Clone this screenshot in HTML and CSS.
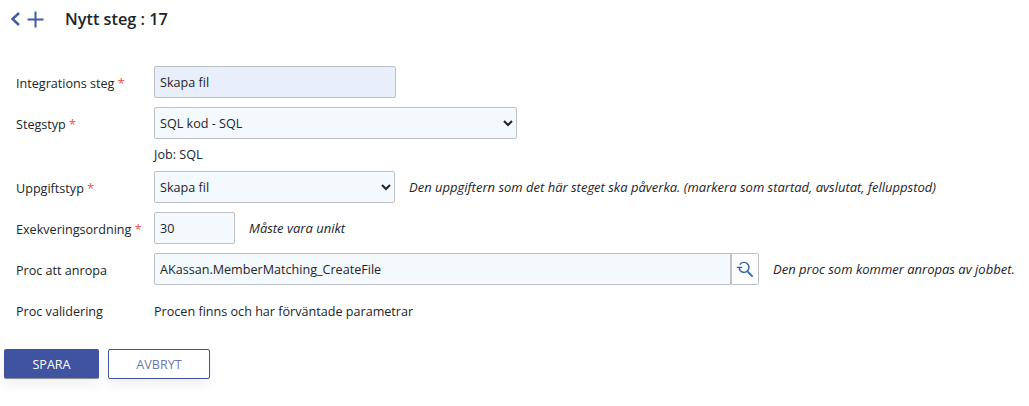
FILE: index.html
```html
<!DOCTYPE html>
<html lang="en">

<head>
    <meta charset="UTF-8">
    <meta name="viewport" content="width=device-width, initial-scale=1.0">
    <title>Nytt steg</title>
    <link rel="stylesheet" href="styles.css">
</head>

<body>
    <div class="header">
        <svg class="icon-back" width="12" height="16" viewBox="0 0 12 16">
            <path d="M10 2 L3.5 8 L10 14" fill="none" stroke="#3f5aa6" stroke-width="2.4" />
        </svg>
        <svg class="icon-add" width="17" height="17" viewBox="0 0 17 17">
            <path d="M8.5 0.5 V16.5 M0.5 8.5 H16.5" fill="none" stroke="#3f5aa6" stroke-width="2" />
        </svg>
        <h1>Nytt steg : 17</h1>
    </div>

    <div class="form">
        <div class="row">
            <label>Integrations steg <span class="req">*</span></label>
            <input class="field field-name" type="text" value="Skapa fil">
        </div>
        <div class="row">
            <label>Stegstyp <span class="req">*</span></label>
            <select class="field field-type">
                <option>SQL kod - SQL</option>
            </select>
        </div>
        <div class="job">Job: SQL</div>
        <div class="row">
            <label>Uppgiftstyp <span class="req">*</span></label>
            <select class="field field-task">
                <option>Skapa fil</option>
            </select>
            <em>Den uppgiftern som det här steget ska påverka. (markera som startad, avslutat, felluppstod)</em>
        </div>
        <div class="row">
            <label>Exekveringsordning <span class="req">*</span></label>
            <input class="field field-order" type="text" value="30">
            <em>Måste vara unikt</em>
        </div>
        <div class="row">
            <label>Proc att anropa</label>
            <div class="lookup">
                <input class="field field-proc" type="text" value="AKassan.MemberMatching_CreateFile">
                <button class="lookup-btn" type="button">
                    <svg width="18" height="18" viewBox="0 0 18 18">
                        <path d="M3.8 4.6 A5 5 0 1 1 3.2 8.8" fill="none" stroke="#2f5fa8" stroke-width="1.4" />
                        <path d="M0.8 7.4 H6.2 M3.5 7.4 V9.6" fill="none" stroke="#2f5fa8" stroke-width="1.3" />
                        <path d="M11.8 11.8 L16.6 16.6" fill="none" stroke="#2f6fc0" stroke-width="2" />
                    </svg>
                </button>
            </div>
            <em>Den proc som kommer anropas av jobbet.</em>
        </div>
        <div class="row row-text">
            <label>Proc validering</label>
            <span>Procen finns och har förväntade parametrar</span>
        </div>
    </div>

    <div class="buttons">
        <button class="btn btn-save" type="button">SPARA</button>
        <button class="btn btn-cancel" type="button">AVBRYT</button>
    </div>
</body>

</html>
```

FILE: styles.css
```css
body {
    margin: 0;
    height: 406px;
    overflow: hidden;
    background: #fff;
    color: #212529;
    font-family: "Open Sans", "Noto Sans", sans-serif;
    font-size: 12.6px;
}

.header {
    display: flex;
    align-items: center;
    height: 38px;
    padding-left: 9px;
}

.icon-add {
    margin-left: 6px;
}

h1 {
    margin: 0 0 0 21px;
    font-size: 16.3px;
    font-weight: 600;
}

.form {
    margin-top: 28px;
    padding-left: 16px;
}

.row {
    display: flex;
    align-items: center;
    min-height: 32px;
    margin-bottom: 9px;
}

.row label {
    flex: none;
    width: 138px;
    padding-top: 2px;
}

.row-text label {
    padding-top: 0;
}

.req {
    color: #f0504f;
}

.field {
    box-sizing: border-box;
    height: 32px;
    padding: 1px 5px 0;
    border: 1px solid #bdc1c6;
    border-radius: 2px;
    background: #f4f9fe;
    color: #212529;
    font-family: inherit;
    font-size: 12.6px;
}

select.field {
    padding: 1px 1px 0;
}

.field-name {
    width: 242px;
    background: #e8effb;
}

.field-type {
    width: 363px;
}

.field-task {
    width: 241px;
}

.field-order {
    width: 81px;
}

.field-proc {
    width: 577px;
    border-radius: 2px 0 0 2px;
}

.job {
    margin: -2px 0 7px 138px;
    height: 18px;
    line-height: 18px;
}

.row em {
    margin-left: 14px;
    white-space: nowrap;
    font-size: 13px;
}

.lookup {
    display: flex;
    flex: none;
}

.lookup-btn {
    display: flex;
    align-items: center;
    justify-content: center;
    box-sizing: border-box;
    width: 28px;
    height: 32px;
    padding: 0;
    border: 1px solid #bdc1c6;
    border-radius: 0 2px 2px 0;
    background: #fff;
}

.row-text {
    margin-bottom: 0;
    min-height: 20px;
    margin-top: 16px;
}

.buttons {
    display: flex;
    gap: 9px;
    margin-top: 28px;
    padding-left: 4px;
}

.btn {
    box-sizing: border-box;
    height: 30px;
    padding-top: 2px;
    border-radius: 2px;
    font-family: inherit;
    font-size: 12.6px;
    box-shadow: 0 6px 12px rgba(0, 0, 0, 0.06);
}

.btn-save {
    width: 95px;
    border: 0;
    border-bottom: 1px solid #8d8d99;
    background: #3f53a0;
    color: #fff;
}

.btn-cancel {
    width: 102px;
    border: 1px solid #3f53a0;
    background: #fff;
    color: #6b78ad;
}
```
